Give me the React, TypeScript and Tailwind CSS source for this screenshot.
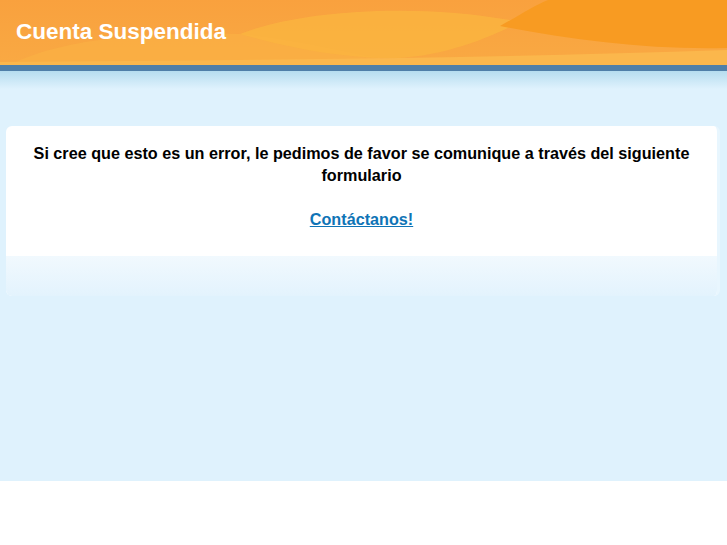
export default function App() {
  return (
    <div className="h-[545px] bg-white" style={{ fontFamily: '"Liberation Sans", Arial, sans-serif' }}>
      <div className="h-[481px] bg-[#dff2fd] flex flex-col">
        <header className="relative h-[65px] overflow-hidden bg-gradient-to-b from-[#f9a13e] to-[#f9a943]">
          <svg className="absolute inset-0 h-full w-full" viewBox="0 0 727 65" preserveAspectRatio="none">
            <path d="M10 65 C 50 45, 110 32, 240 34 C 300 40, 340 52, 380 58 L 380 65 Z" fill="#fab245" opacity="0.6" />
            <path d="M240 34 C 300 10, 420 2, 520 22 C 470 48, 420 60, 380 58 C 320 55, 280 45, 240 34 Z" fill="#fab43f" opacity="0.85" />
            <path d="M500 26 C 520 15, 535 5, 548 0 L 727 0 L 727 48 C 650 50, 570 40, 500 26 Z" fill="#f89b22" />
            <path d="M0 62 C 250 60, 500 58, 727 50 L 727 65 L 0 65 Z" fill="#fbb74c" />
          </svg>
          <h1 className="relative pl-4 pt-[18px] text-[22.5px] font-bold leading-[27px] text-white">Cuenta Suspendida</h1>
        </header>
        <div className="h-[6px] bg-[#4f7fa8]" />
        <div className="h-[18px] bg-gradient-to-b from-[#b6ddef] to-[#dff2fd]" />
        <div className="pt-[37px] pl-[6px] pr-[7px]">
          <div className="overflow-hidden rounded-md border-r-[3px] border-[#e8f6fe] bg-white">
            <div className="px-4 pt-[16px] pb-[26px] text-center text-[16.2px] font-bold leading-[22px] text-black">
              <p>Si cree que esto es un error, le pedimos de favor se comunique a través del siguiente formulario</p>
              <p className="mt-[22px]">
                <a href="#" className="text-[#0f74b6] underline">Contáctanos!</a>
              </p>
            </div>
            <div className="h-[40px] bg-gradient-to-b from-[#f1f9fe] to-[#e3f3fd]" />
          </div>
        </div>
      </div>
    </div>
  );
}
